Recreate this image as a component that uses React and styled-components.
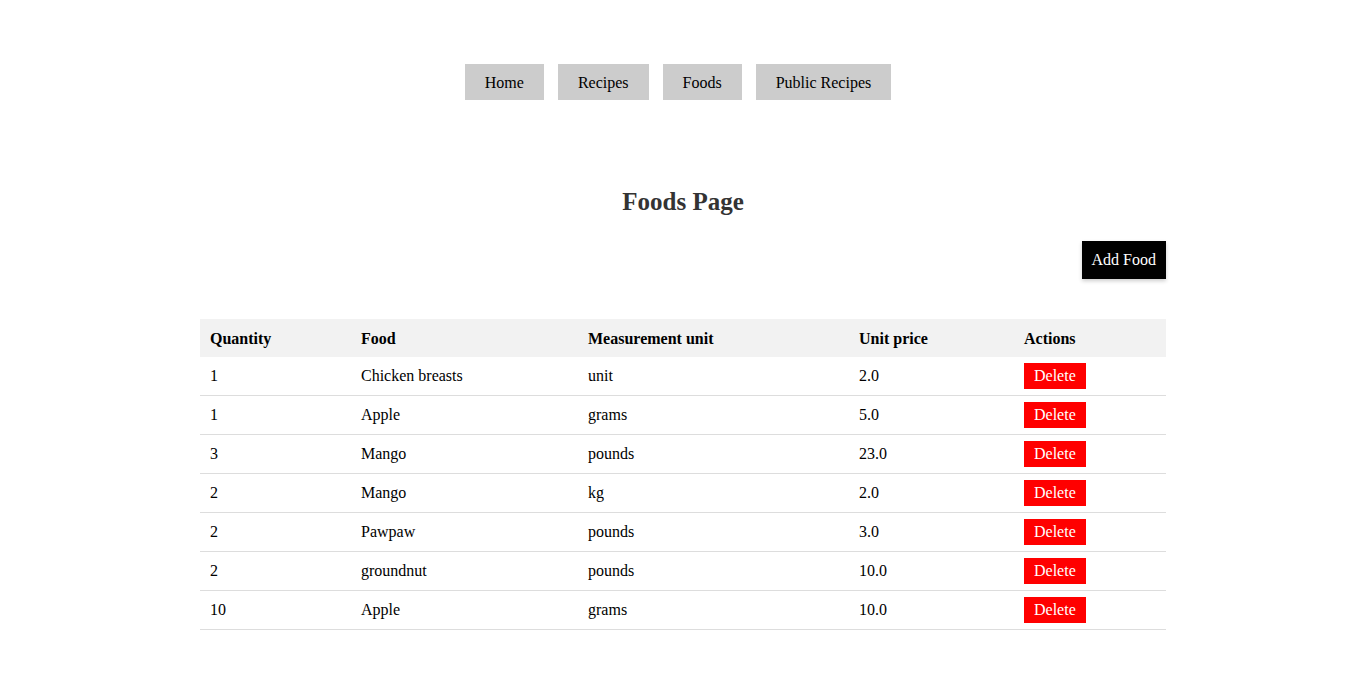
import styled, { createGlobalStyle } from 'styled-components'

const GlobalStyle = createGlobalStyle`
body{
  margin:0;
  font-family:"Liberation Serif","Times New Roman",serif;
  font-size:16px;
  color:#000;
  background:#fff;
}
`

const foods = [
  { qty: '1', name: 'Chicken breasts', unit: 'unit', price: '2.0' },
  { qty: '1', name: 'Apple', unit: 'grams', price: '5.0' },
  { qty: '3', name: 'Mango', unit: 'pounds', price: '23.0' },
  { qty: '2', name: 'Mango', unit: 'kg', price: '2.0' },
  { qty: '2', name: 'Pawpaw', unit: 'pounds', price: '3.0' },
  { qty: '2', name: 'groundnut', unit: 'pounds', price: '10.0' },
  { qty: '10', name: 'Apple', unit: 'grams', price: '10.0' },
]

const columns = [
  { label: 'Quantity', width: 151 },
  { label: 'Food', width: 227 },
  { label: 'Measurement unit', width: 271 },
  { label: 'Unit price', width: 165 },
  { label: 'Actions', width: 152 },
]

function App() {
  return (
    <>
      <GlobalStyle />
      <Nav>
        <NavLink>Home</NavLink>
        <NavLink>Recipes</NavLink>
        <NavLink>Foods</NavLink>
        <NavLink>Public Recipes</NavLink>
      </Nav>
      <Main>
        <Title>Foods Page</Title>
        <Toolbar>
          <AddButton>Add Food</AddButton>
        </Toolbar>
        <Table>
          <colgroup>
            {columns.map((c) => (
              <col key={c.label} style={{ width: c.width }} />
            ))}
          </colgroup>
          <thead>
            <tr>
              {columns.map((c) => (
                <Th key={c.label}>{c.label}</Th>
              ))}
            </tr>
          </thead>
          <tbody>
            {foods.map((f, i) => (
              <Row key={i}>
                <Td>{f.qty}</Td>
                <Td>{f.name}</Td>
                <Td>{f.unit}</Td>
                <Td>{f.price}</Td>
                <Td>
                  <DeleteButton>Delete</DeleteButton>
                </Td>
              </Row>
            ))}
          </tbody>
        </Table>
      </Main>
    </>
  )
}

export default App

const Nav = styled.nav`
display:flex;
justify-content:center;
gap:14px;
padding:64px 10px 0 0;
`

const NavLink = styled.a`
display:block;
background:#ccc;
color:#000;
padding:10px 20px 8px;
line-height:18px;
cursor:pointer;
`

const Main = styled.main`
padding:0 200px;
`

const Title = styled.h2`
text-align:center;
font-size:25px;
font-weight:bold;
color:#333;
margin:88px 0 0;
line-height:28px;
`

const Toolbar = styled.div`
display:flex;
justify-content:flex-end;
margin-top:25px;
`

const AddButton = styled.button`
font-family:inherit;
font-size:16px;
background:#000;
color:#fff;
border:none;
padding:10px 10px;
line-height:18px;
box-shadow:0 2px 4px rgba(0,0,0,.2);
cursor:pointer;
`

const Table = styled.table`
width:100%;
margin-top:40px;
border-collapse:collapse;
table-layout:fixed;
`

const Th = styled.th`
background:#f2f2f2;
text-align:left;
font-weight:bold;
padding:11px 10px 9px;
line-height:18px;
`

const Row = styled.tr`
border-bottom:1px solid #ddd;
`

const Td = styled.td`
padding:6px 10px;
height:26px;
line-height:18px;
`

const DeleteButton = styled.button`
font-family:inherit;
font-size:16px;
background:#f00;
color:#fff;
border:none;
padding:4px 10px;
line-height:18px;
cursor:pointer;
`
